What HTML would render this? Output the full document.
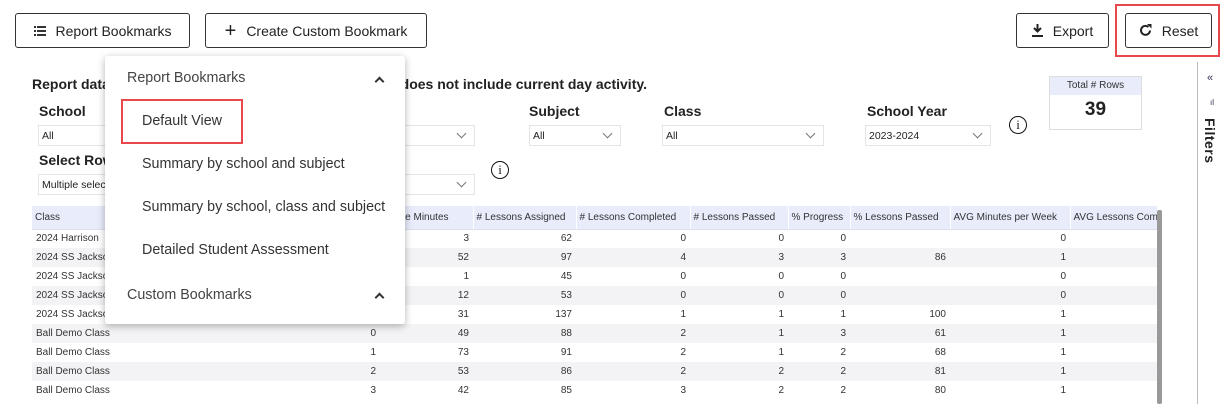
<!DOCTYPE html>
<html><head><style>
*{box-sizing:border-box;margin:0;padding:0}
body{width:1224px;height:404px;overflow:hidden;background:#fff;font-family:"Liberation Sans",sans-serif;position:relative;color:#222}
.a{position:absolute}
.btn{position:absolute;border:1px solid #333;border-radius:3px;background:#fff;font-size:14px;display:flex;align-items:center;justify-content:center;gap:10px;color:#222}
.lbl{position:absolute;font-weight:bold;font-size:14px;color:#222;white-space:nowrap}
.sel{position:absolute;border:1px solid #e4e4e4;height:21px;font-size:10.5px;padding:4px 0 0 3px;color:#222;white-space:nowrap;overflow:hidden}
.sel:after{content:"";position:absolute;right:9px;top:4px;width:6px;height:6px;border-right:1px solid #777;border-bottom:1px solid #777;transform:rotate(45deg)}
.info{position:absolute;width:18px;height:18px;border:1px solid #111;border-radius:50%;font:13px "Liberation Serif",serif;text-align:center;line-height:16px}
table{position:absolute;left:32px;top:206px;border-collapse:collapse;font-size:10px;color:#333;table-layout:fixed;width:1125px}
td,th{height:19px;padding:0 4px;white-space:nowrap;overflow:hidden;font-weight:normal}
th{background:#e8ecfb;height:23px;text-align:left;border-right:1px solid #fff;border-bottom:1px solid #dde;padding:0 3px}
td{text-align:right}
td:first-child{text-align:left}
tbody tr:nth-child(even) td{background:#f3f3f5}
.menu{position:absolute;left:105px;top:56px;width:300px;height:268px;background:#fff;border-radius:3px;box-shadow:0 2px 8px rgba(0,0,0,.3);font-size:14.3px;color:#444}
.menu div{position:absolute;white-space:nowrap}
.chev{width:7px;height:7px;border-left:2px solid #333;border-top:2px solid #333;transform:rotate(45deg)}
</style></head><body>
<div class="btn" style="left:15px;top:13px;width:175px;height:35px"><svg width="12" height="10"><g fill="#333"><rect x="0" y="0" width="2" height="2"/><rect x="0" y="4" width="2" height="2"/><rect x="0" y="8" width="2" height="2"/><rect x="3" y="0" width="9" height="2"/><rect x="3" y="4" width="9" height="2"/><rect x="3" y="8" width="9" height="2"/></g></svg>Report Bookmarks</div>
<div class="btn" style="left:205px;top:13px;width:222px;height:35px"><span style="font-size:20px;line-height:14px">+</span>Create Custom Bookmark</div>
<div class="btn" style="left:1016px;top:13px;width:93px;height:35px"><svg width="11" height="13"><path d="M5.5 0v7M2 4l3.5 3.5L9 4" stroke="#222" stroke-width="2" fill="none"/><rect x="0" y="11" width="11" height="2" fill="#222"/></svg>Export</div>
<div class="a" style="left:1115px;top:4px;width:105px;height:53px;border:2px solid #e8484b"></div>
<div class="btn" style="left:1125px;top:13px;width:87px;height:35px"><svg width="13" height="13"><path d="M11 6.5A4.5 4.5 0 1 1 9.5 3" stroke="#222" stroke-width="2" fill="none"/><path d="M8 0h4.5v4.5z" fill="#222"/></svg>Reset</div>
<div class="a" style="left:1197px;top:62px;width:1px;height:342px;background:#bbb"></div>
<div class="a" style="left:1207px;top:72px;font-size:11px;color:#335">«</div>
<div class="a" style="left:1210px;top:98px;font-size:8px;color:#335">ıl</div>
<div class="a" style="left:1202px;top:118px;writing-mode:vertical-rl;font-weight:bold;font-size:14px;color:#222;letter-spacing:.5px">Filters</div>
<div class="a" style="left:1049px;top:76px;width:93px;height:54px;border:1px solid #ddd"><div style="background:#e8ecfb;height:18px;font-size:10px;text-align:center;line-height:18px;color:#333">Total # Rows</div><div style="text-align:center;font-weight:bold;font-size:19px;margin-top:4px">39</div></div>
<div class="lbl" style="left:32px;top:76px">Report data</div>
<div class="lbl" style="right:577px;top:76px">does not include current day activity.</div>
<div class="lbl" style="left:39px;top:103px">School</div>
<div class="sel" style="left:38px;top:125px;width:220px">All</div>
<div class="sel" style="left:258px;top:125px;width:217px"></div>
<div class="lbl" style="left:529px;top:103px">Subject</div>
<div class="sel" style="left:529px;top:125px;width:92px">All</div>
<div class="lbl" style="left:664px;top:103px">Class</div>
<div class="sel" style="left:662px;top:125px;width:162px">All</div>
<div class="lbl" style="left:867px;top:103px">School Year</div>
<div class="sel" style="left:865px;top:125px;width:126px">2023-2024</div>
<div class="info" style="left:1009px;top:116px">i</div>
<div class="lbl" style="left:39px;top:152px">Select Rows</div>
<div class="sel" style="left:38px;top:174px;width:437px">Multiple selections</div>
<div class="info" style="left:491px;top:161px">i</div>
<table>
<colgroup><col style="width:248px"><col style="width:100px"><col style="width:93px"><col style="width:103px"><col style="width:114px"><col style="width:98px"><col style="width:62px"><col style="width:100px"><col style="width:120px"><col style="width:87px"></colgroup>
<thead><tr><th>Class</th><th></th><th>Active Minutes</th><th># Lessons Assigned</th><th># Lessons Completed</th><th># Lessons Passed</th><th>% Progress</th><th>% Lessons Passed</th><th>AVG Minutes per Week</th><th>AVG Lessons Com</th></tr></thead>
<tbody>
<tr><td>2024 Harrison</td><td></td><td>3</td><td>62</td><td>0</td><td>0</td><td>0</td><td></td><td>0</td><td></td></tr>
<tr><td>2024 SS Jackson</td><td></td><td>52</td><td>97</td><td>4</td><td>3</td><td>3</td><td>86</td><td>1</td><td></td></tr>
<tr><td>2024 SS Jackson</td><td></td><td>1</td><td>45</td><td>0</td><td>0</td><td>0</td><td></td><td>0</td><td></td></tr>
<tr><td>2024 SS Jackson</td><td></td><td>12</td><td>53</td><td>0</td><td>0</td><td>0</td><td></td><td>0</td><td></td></tr>
<tr><td>2024 SS Jackson</td><td></td><td>31</td><td>137</td><td>1</td><td>1</td><td>1</td><td>100</td><td>1</td><td></td></tr>
<tr><td>Ball Demo Class</td><td>0</td><td>49</td><td>88</td><td>2</td><td>1</td><td>3</td><td>61</td><td>1</td><td></td></tr>
<tr><td>Ball Demo Class</td><td>1</td><td>73</td><td>91</td><td>2</td><td>1</td><td>2</td><td>68</td><td>1</td><td></td></tr>
<tr><td>Ball Demo Class</td><td>2</td><td>53</td><td>86</td><td>2</td><td>2</td><td>2</td><td>81</td><td>1</td><td></td></tr>
<tr><td>Ball Demo Class</td><td>3</td><td>42</td><td>85</td><td>3</td><td>2</td><td>2</td><td>80</td><td>1</td><td></td></tr>
</tbody></table>
<div class="a" style="left:1157px;top:210px;width:5px;height:194px;background:#999;border-radius:2px"></div>
<div class="menu">
<div style="left:22px;top:14px">Report Bookmarks</div>
<div class="chev" style="left:271px;top:22px"></div>
<div style="left:16px;top:43px;width:122px;height:45px;border:2px solid #e8484b"></div>
<div style="left:37px;top:57px;color:#333">Default View</div>
<div style="left:37px;top:100px;color:#333">Summary by school and subject</div>
<div style="left:37px;top:143px;color:#333">Summary by school, class and subject</div>
<div style="left:37px;top:186px;color:#333">Detailed Student Assessment</div>
<div style="left:22px;top:231px">Custom Bookmarks</div>
<div class="chev" style="left:271px;top:238px"></div>
</div>
</body></html>
